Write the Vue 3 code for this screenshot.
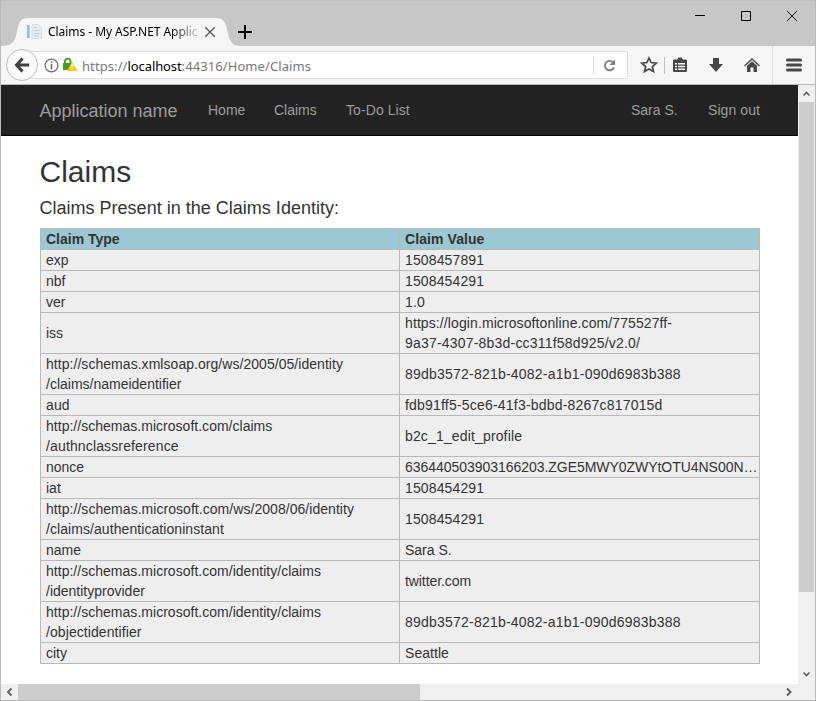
<script setup>
const claims = [
  { type: [['exp', 0]], value: [['1508457891', 0.13]] },
  { type: [['nbf', 0]], value: [['1508454291', 0.13]] },
  { type: [['ver', 0]], value: [['1.0', 0.1]] },
  { type: [['iss', 0]], value: [['https://login.microsoftonline.com/775527ff-', 0.1], ['9a37-4307-8b3d-cc311f58d925/v2.0/', 0.2]] },
  { type: [['http://schemas.xmlsoap.org/ws/2005/05/identity', 0.045], ['/claims/nameidentifier', 0]], value: [['89db3572-821b-4082-a1b1-090d6983b388', 0.22]] },
  { type: [['aud', 0.1]], value: [['fdb91ff5-5ce6-41f3-bdbd-8267c817015d', 0.2]] },
  { type: [['http://schemas.microsoft.com/claims', 0.02], ['/authnclassreference', 0.14]], value: [['b2c_1_edit_profile', 0.15]] },
  { type: [['nonce', 0]], value: [['636440503903166203.ZGE5MWY0ZWYtOTU4NS00N…', -0.04]] },
  { type: [['iat', 0]], value: [['1508454291', 0.13]] },
  { type: [['http://schemas.microsoft.com/ws/2008/06/identity', 0.045], ['/claims/authenticationinstant', 0.07]], value: [['1508454291', 0.13]] },
  { type: [['name', 0]], value: [['Sara S.', 0]] },
  { type: [['http://schemas.microsoft.com/identity/claims', 0.025], ['/identityprovider', 0]], value: [['twitter.com', -0.08]] },
  { type: [['http://schemas.microsoft.com/identity/claims', 0.025], ['/objectidentifier', 0.08]], value: [['89db3572-821b-4082-a1b1-090d6983b388', 0.22]] },
  { type: [['city', 0]], value: [['Seattle', 0.05]] },
]
</script>

<template>
  <div class="window">
    <header class="titlebar">
      <div class="tab">
        <svg class="tab-shape" width="240" height="28" viewBox="0 0 240 28">
          <path d="M0 28C9 28 13 25 15 18L17 9C18.500 3 21 0 27 0H215C221 0 224 3 225.500 9L227.500 18C229.500 25 233 28 239 28Z" fill="#f6f6f6" />
        </svg>
        <div class="tab-content">
          <svg class="favicon" width="16" height="16" viewBox="0 0 16 16">
            <path d="M1 1H4V14H1Z" fill="#8dbde2" />
            <path d="M3 1H4V14H3Z" fill="#b9d7ec" />
            <path d="M6 .5H12L15.500 4V14.500H6Z" fill="#e9edf2" stroke="#d8dde4" />
            <path d="M8 3.500H11M8 6.500H13.500M8 9.500H13.500M8 12H13" stroke="#c0c9d4" />
          </svg>
          <span class="tab-title">Claims - My ASP.NET Applic</span>
          <svg class="tab-close" width="12" height="12" viewBox="0 0 12 12"><path d="M1.200 1.200L10.800 10.800M10.800 1.200L1.200 10.800" stroke="#555" stroke-width="1.300" /></svg>
        </div>
      </div>
      <svg class="new-tab" width="14" height="14" viewBox="0 0 14 14"><path d="M7 0V14M0 7H14" stroke="#000" stroke-width="2" /></svg>
      <div class="controls">
        <svg width="12" height="12" viewBox="0 0 12 12"><path d="M1 5.500H11" stroke="#000" /></svg>
        <svg width="12" height="12" viewBox="0 0 12 12"><path d="M1.500 1.500H10.500V10.500H1.500Z" fill="none" stroke="#000" /></svg>
        <svg width="12" height="12" viewBox="0 0 12 12"><path d="M1 1L11 11M11 1L1 11" stroke="#111" /></svg>
      </div>
    </header>

    <div class="toolbar">
      <button class="back" aria-label="Back">
        <svg width="16" height="16" viewBox="0 0 16 16"><path d="M8.500 1.500L2.500 8L8.500 14.500M3 8H15.200" fill="none" stroke="#404040" stroke-width="3" /></svg>
      </button>
      <div class="address">
        <svg width="15" height="15" viewBox="0 0 15 15"><circle cx="7.500" cy="7.500" r="6.400" fill="none" stroke="#6b6b6b" stroke-width="1.200" /><path d="M7.500 6V11.500M7.500 3.200V4.900" stroke="#6b6b6b" stroke-width="1.600" /></svg>
        <svg class="lock" width="16" height="16" viewBox="0 0 16 16">
          <path d="M3 7V4.500C3 .6 8.500 .6 8.500 4.500V7" fill="none" stroke="#479b24" stroke-width="1.900" />
          <path d="M1 6H9.500V13H1Z" fill="#479b24" />
          <path d="M10 5.700L14.500 13.500H5.700Z" fill="#ffbf00" stroke="#ffbf00" stroke-linejoin="round" />
          <path d="M10.100 7V10.700M10.100 11.700V13.200" stroke="#fff" stroke-width="1.400" />
        </svg>
        <span class="url">https://<b>localhost</b>:44316/Home/Claims</span>
        <span class="reload">
          <svg width="13" height="13" viewBox="0 0 13 13"><path d="M10 3.300A4.700 4.700 0 1 0 10.900 8.500" fill="none" stroke="#808080" stroke-width="1.900" /><path d="M12 .5V6H6.500Z" fill="#808080" /></svg>
        </span>
      </div>
      <div class="tools">
        <svg width="18" height="18" viewBox="0 0 18 18"><path d="M9 2L11.100 6.500L16.200 7.100L12.400 10.500L13.500 15.500L9 13L4.500 15.500L5.600 10.500L1.800 7.100L6.900 6.500Z" fill="none" stroke="#484848" stroke-width="1.700" /></svg>
        <i class="rule"></i>
        <svg width="16" height="16" viewBox="0 0 16 16"><path d="M2 2.500H5L6.500 .5H9.500L11 2.500H14Q15 2.500 15 3.500V14Q15 15 14 15H2Q1 15 1 14V3.500Q1 2.500 2 2.500Z" fill="#484848" /><path d="M3 6H5V7.500H3ZM6 6H13V7.500H6ZM3 8.700H5V10.200H3ZM6 8.700H13V10.200H6ZM3 11.400H5V12.900H3ZM6 11.400H13V12.900H6Z" fill="#f6f6f6" /></svg>
        <svg width="16" height="16" viewBox="0 0 16 16"><path d="M5 1.500Q5 1 5.500 1H10.500Q11 1 11 1.500V7H15L8 15L1 7H5Z" fill="#484848" /></svg>
        <svg width="18" height="16" viewBox="0 0 18 16"><path d="M1.500 9L9 2L16.500 9" fill="none" stroke="#484848" stroke-width="1.400" /><path d="M4 8.800L9 4.200L14 8.800V15H10.500V10.500H7.500V15H4Z" fill="#484848" /></svg>
        <i class="menu-rule"></i>
        <svg width="16" height="14" viewBox="0 0 16 14"><path d="M1.500 2H14.500M1.500 7H14.500M1.500 12H14.500" stroke="#484848" stroke-width="3" stroke-linecap="round" /></svg>
      </div>
    </div>

    <div class="viewport">
      <div class="page">
        <nav class="navbar">
          <a class="brand">Application name</a>
          <a class="home">Home</a>
          <a class="claims">Claims</a>
          <a class="todo">To-Do List</a>
          <a class="user">Sara S.</a>
          <a class="signout">Sign out</a>
        </nav>
        <main>
          <h2>Claims</h2>
          <h4>Claims Present in the Claims Identity:</h4>
          <table>
            <thead>
              <tr><th class="type-head">Claim Type</th><th class="value-head">Claim Value</th></tr>
            </thead>
            <tbody>
              <tr v-for="(claim, i) in claims" :key="i">
                <td><div v-for="[text, tracking] in claim.type" :key="text" :style="{ letterSpacing: tracking + 'px' }">{{ text }}</div></td>
                <td><div v-for="[text, tracking] in claim.value" :key="text" :style="{ letterSpacing: tracking + 'px' }">{{ text }}</div></td>
              </tr>
            </tbody>
          </table>
        </main>
      </div>
      <div class="vscroll">
        <svg width="17" height="17" viewBox="0 0 17 17"><path d="M5.500 10.500L8.500 7.500L11.500 10.500" fill="none" stroke="#606060" stroke-width="1.700" /></svg>
        <div class="vthumb"></div>
        <svg class="end" width="17" height="17" viewBox="0 0 17 17"><path d="M5.500 5.500L8.500 8.500L11.500 5.500" fill="none" stroke="#606060" stroke-width="1.700" /></svg>
      </div>
    </div>
    <div class="hscroll">
      <svg width="17" height="16" viewBox="0 0 17 16"><path d="M10.500 4.500L7 8L10.500 11.500" fill="none" stroke="#606060" stroke-width="1.900" /></svg>
      <div class="hthumb"></div>
      <svg class="end" width="17" height="16" viewBox="0 0 17 16"><path d="M6 4.500L9.500 8L6 11.500" fill="none" stroke="#606060" stroke-width="1.900" /></svg>
    </div>
  </div>
</template>

<style>
body {
  margin: 0;
  overflow: hidden;
}
</style>

<style scoped>
* {
  box-sizing: border-box;
}
svg {
  display: block;
  flex: none;
}
.window {
  display: flex;
  flex-direction: column;
  width: 816px;
  height: 701px;
  border: 1px solid #b9b9b9;
  border-top-color: #c0c0c0;
  background: #fff;
  font-family: "Liberation Sans", Arial, sans-serif;
  color: #333;
}
.titlebar {
  display: flex;
  flex: none;
  height: 45px;
  background: #c7c7c7;
}
.tab {
  display: grid;
  width: 237px;
  margin-top: 17px;
}
.tab > * {
  grid-area: 1 / 1;
}
.tab-content {
  display: flex;
  align-items: center;
  height: 28px;
  padding-left: 25px;
}
.tab-title {
  width: 150px;
  margin-left: 6px;
  overflow: hidden;
  white-space: nowrap;
  font: 12px/18px "Noto Sans", "Open Sans", sans-serif;
  letter-spacing: -0.05px;
  color: #000;
  -webkit-mask-image: linear-gradient(to right, #000 82%, rgba(0, 0, 0, 0.15));
  mask-image: linear-gradient(to right, #000 82%, rgba(0, 0, 0, 0.15));
}
.tab-close {
  margin-left: 6px;
}
.new-tab {
  margin-top: 24px;
}
.controls {
  display: flex;
  gap: 34px;
  margin: 9px 17px 0 auto;
}
.toolbar {
  display: flex;
  flex: none;
  align-items: center;
  height: 39px;
  padding-left: 5px;
  border-bottom: 1px solid #b9b9b9;
  background: #f6f6f6;
}
.back {
  display: grid;
  place-items: center;
  flex: none;
  z-index: 1;
  width: 32px;
  height: 32px;
  padding: 0;
  border: 1px solid #bdbdbd;
  border-radius: 50%;
  background: #fafafa;
}
.address {
  display: flex;
  align-items: center;
  width: 606px;
  height: 28px;
  margin-left: -16px;
  padding-left: 21px;
  border: 1px solid #dedede;
  background: #fff;
}
.lock {
  margin-left: 3px;
}
.url {
  margin-left: 4px;
  padding-top: 1px;
  font: 13px/20px "Noto Sans", "Open Sans", sans-serif;
  letter-spacing: 0.09px;
  white-space: nowrap;
  color: #777;
}
.url b {
  font-weight: 400;
  letter-spacing: -0.1px;
  color: #000;
}
.reload {
  display: grid;
  place-items: center;
  width: 34px;
  height: 18px;
  margin-left: auto;
  padding-right: 2px;
  border-left: 1px solid #d8d8d8;
}
.tools {
  display: flex;
  align-items: center;
  margin-left: 12px;
}
.rule {
  width: 1px;
  height: 17px;
  margin: 0 7px 0 6px;
  background: #c0c0c0;
}
.tools svg:nth-of-type(3) {
  margin-left: 20px;
}
.tools svg:nth-of-type(4) {
  margin-left: 19px;
}
.menu-rule {
  width: 1px;
  height: 38px;
  margin: 0 13px 0 11px;
  background: #dedede;
}
.viewport {
  display: flex;
  flex: none;
  height: 599px;
}
.page {
  width: 797px;
  height: 599px;
  overflow: hidden;
}
.navbar {
  display: flex;
  height: 51px;
  padding-left: 38px;
  border-bottom: 1px solid #080808;
  background: #222;
  font-size: 14px;
  line-height: 50px;
  white-space: nowrap;
  color: #9d9d9d;
}
.brand {
  width: 169px;
  padding: 1px 0 0 0.5px;
  font-size: 18px;
}
.home {
  width: 66px;
}
.claims {
  width: 72px;
}
.todo {
  letter-spacing: 0.08px;
}
.user {
  width: 77px;
  margin-left: auto;
}
.signout {
  width: 90px;
  letter-spacing: 0.08px;
}
main {
  padding: 18px 37px 0 39px;
}
h2,
h4 {
  margin: 0 0 0 -0.5px;
  font-weight: 400;
  white-space: nowrap;
}
h2 {
  font-size: 30px;
  line-height: 36px;
}
h4 {
  margin: 8px 0 10px -0.5px;
  font-size: 18px;
  line-height: 20px;
  letter-spacing: 0.01px;
}
table {
  width: 720px;
  table-layout: fixed;
  border-collapse: collapse;
  font-size: 14px;
  line-height: 20px;
}
th,
td {
  height: 21px;
  padding: 0 0 0 5px;
  border: 1px solid #b9b9b9;
  background: #eee;
  text-align: left;
  vertical-align: middle;
  white-space: nowrap;
}
th {
  background: #9cc8d4;
}
.type-head {
  width: 359px;
}
.value-head {
  letter-spacing: 0.08px;
}
.vscroll {
  display: flex;
  flex-direction: column;
  width: 17px;
  background: #f0f0f0;
}
.vthumb {
  width: 15px;
  height: 490px;
  margin-left: 1px;
  background: #cdcdcd;
}
.end {
  margin-top: auto;
}
.hscroll {
  display: flex;
  flex: none;
  height: 16px;
  background: #f0f0f0;
}
.hthumb {
  width: 402px;
  background: #cdcdcd;
}
.hscroll .end {
  margin: 0 17px 0 auto;
}
</style>
